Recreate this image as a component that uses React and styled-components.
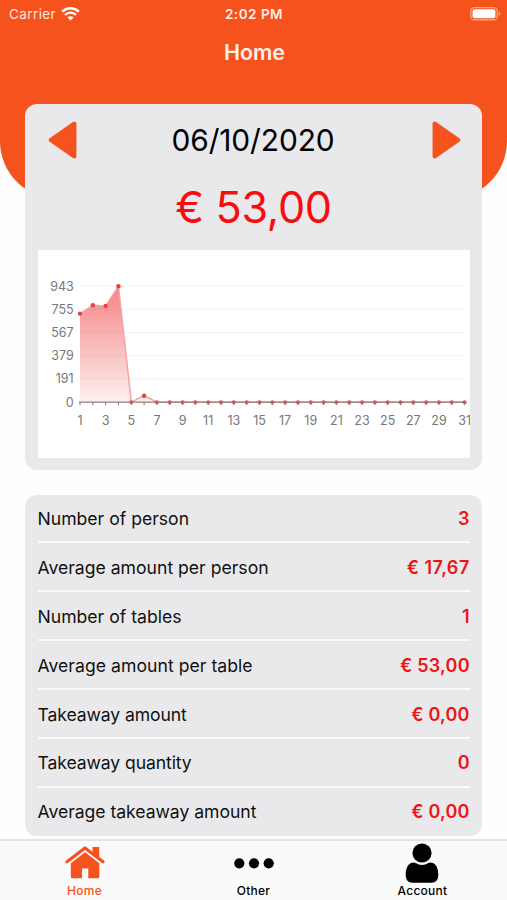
import React from "react";
import styled, { createGlobalStyle } from "styled-components";

const GlobalStyle = createGlobalStyle`
  * {
    box-sizing: border-box;
  }
  body {
    margin: 0;
    background: #fefefe;
    font-family: Inter, "Liberation Sans", sans-serif;
    color: #000;
  }
`;

const Screen = styled.div`
  display: flex;
  flex-direction: column;
  height: 900px;
  width: 507px;
  overflow: hidden;
`;

const Header = styled.header`
  flex: none;
  height: 199px;
  background: #f6521e;
  color: #fff;
  border-radius: 0 0 58px 58px;
`;

const StatusBar = styled.div`
  display: grid;
  grid-template-columns: 1fr auto 1fr;
  align-items: center;
  height: 27px;
  padding: 0 6px 0 9px;
  font-size: 13.5px;
  svg {
    display: block;
  }
`;

const Carrier = styled.div`
  display: flex;
  align-items: center;
  gap: 5px;
  letter-spacing: 0.4px;
  color: #ffe6dc;
`;

const Clock = styled.div`
  font-weight: 600;
  color: #ffeee8;
  letter-spacing: 0.5px;
  margin-left: -2px;
`;

const BatterySlot = styled.div`
  display: flex;
  justify-content: flex-end;
`;

const Title = styled.h1`
  margin: 0;
  padding-left: 2px;
  height: 50px;
  line-height: 50px;
  text-align: center;
  font-size: 21.5px;
  font-weight: 600;
  color: #ffefe9;
`;

const Content = styled.main`
  flex: 1;
  min-height: 0;
  display: flex;
  flex-direction: column;
  gap: 25px;
  margin-top: -95.5px;
  padding: 0 25px;
  overflow: hidden;
`;

const Card = styled.section`
  flex: none;
  padding: 0 12.5px;
  border-radius: 12px;
  background: #e9e9eb;
`;

const SummaryCard = styled(Card)`
  height: 366px;
`;

const DateRow = styled.div`
  display: flex;
  align-items: center;
  justify-content: space-between;
  height: 73px;
  padding: 0 9px 0 10px;
`;

const ArrowButton = styled.button`
  width: 29px;
  height: 38px;
  padding: 0;
  border: 0;
  background: none;
  svg {
    display: block;
    transform: ${(p) => (p.$next ? "scaleX(-1)" : "none")};
  }
`;

const DateText = styled.div`
  font-size: 29.9px;
  letter-spacing: -0.1px;
  margin-left: -2px;
`;

const Total = styled.div`
  height: 73.5px;
  line-height: 61.5px;
  text-align: center;
  font-size: 43.2px;
  color: #f70d0d;
  letter-spacing: -0.3px;
`;

const ChartBox = styled.div`
  height: 208px;
  background: #fff;
  svg {
    display: block;
    width: 100%;
  }
  text {
    font-size: 12.5px;
    fill: #777;
  }
`;

const StatList = styled(Card)`
  height: 341px;
`;

const Stat = styled.div`
  display: flex;
  align-items: center;
  justify-content: space-between;
  height: 48.85px;
  padding-top: 1.5px;
  border-bottom: 2px solid #fafafa;
  font-size: 17.6px;
  color: #111;
  &:last-child {
    border-bottom: 0;
    padding-top: 0;
  }
`;

const StatLabel = styled.span`
  letter-spacing: ${(p) => p.$spacing || 0}px;
`;

const StatValue = styled.span`
  font-size: 18px;
  font-weight: 600;
  color: #ee1414;
  letter-spacing: ${(p) => p.$spacing || 0.25}px;
  margin-right: -0.25px;
`;

const TabBar = styled.nav`
  flex: none;
  display: grid;
  grid-template-columns: repeat(3, 1fr);
  height: 61px;
  border-top: 2px solid #e3e3e3;
  background: #fafafa;
`;

const Tab = styled.a`
  display: flex;
  flex-direction: column;
  align-items: center;
  color: ${(p) => (p.$active ? "#f6521e" : "#000")};
  font-size: 12px;
  font-weight: 500;
  letter-spacing: 0.25px;
  line-height: 16px;
  svg {
    display: block;
    height: 42px;
  }
`;

const sales = [720, 788, 783, 943, 0, 53];
const days = Array.from({ length: 31 }, (_, i) => ({
  day: i + 1,
  amount: sales[i] || 0,
}));
const levels = [943, 755, 567, 379, 191, 0];

const BASE = 152.2;
const x = (day) => 42 + (day - 1) * 12.82;
const y = (amount) => BASE - (amount / 943) * 116;

const SalesChart = () => {
  const line = days.map((d) => `${x(d.day)},${y(d.amount)}`).join(" ");

  return (
    <svg height="208">
      <defs>
        <linearGradient id="fade" x1="0" y1="0" x2="0" y2="1">
          <stop offset="0" stopColor="#ee4545" stopOpacity="0.66" />
          <stop offset="1" stopColor="#ee4545" stopOpacity="0.08" />
        </linearGradient>
      </defs>
      {levels.map((l) => (
        <g key={l}>
          {l > 0 && (
            <line x1={x(1)} x2={x(31)} y1={y(l)} y2={y(l)} stroke="#f3f3f3" />
          )}
          <text x="35.7" y={y(l) + 4.7} textAnchor="end">
            {l}
          </text>
        </g>
      ))}
      <polygon
        points={`${x(1)},${BASE} ${line} ${x(31)},${BASE}`}
        fill="url(#fade)"
      />
      <polyline points={line} fill="none" stroke="#f5a3a3" strokeWidth="1.5" />
      <line
        x1={x(1) - 1}
        x2={x(31)}
        y1={BASE}
        y2={BASE}
        stroke="#8f7d84"
        strokeWidth="1.3"
      />
      {days.map((d) => (
        <g key={d.day}>
          <line
            x1={x(d.day)}
            x2={x(d.day)}
            y1={BASE}
            y2={BASE + 3}
            stroke="#777"
          />
          <circle
            cx={x(d.day)}
            cy={y(d.amount)}
            r={d.amount ? 2.2 : 2}
            fill={d.amount ? "#e83f45" : "#d2565f"}
          />
          {d.day % 2 === 1 && (
            <text x={x(d.day)} y="175.3" textAnchor="middle">
              {d.day}
            </text>
          )}
        </g>
      ))}
    </svg>
  );
};

const WifiIcon = () => (
  <svg width="19" height="14" viewBox="0 0 19 14" fill="none" stroke="#fff">
    <path d="M1.2 4.6a11.8 11.8 0 0 1 16.6 0" strokeWidth="2.6" />
    <path d="M4.1 7.8a7.7 7.7 0 0 1 10.8 0" strokeWidth="2.4" />
    <path
      d="M9.5 13.4 6.5 10.4a4.2 4.2 0 0 1 6 0z"
      fill="#fff"
      stroke="none"
    />
  </svg>
);

const BatteryIcon = () => (
  <svg width="31" height="14" viewBox="0 0 31 14">
    <rect
      x="0.8"
      y="0.7"
      width="26.4"
      height="12.2"
      rx="3.6"
      fill="none"
      stroke="#fba98e"
      strokeWidth="1.2"
    />
    <rect x="2.6" y="2.2" width="22.8" height="9" rx="2" fill="#fff" />
    <path d="M28.6 4.7v4c1-.3 1.6-1.1 1.6-2s-.6-1.7-1.6-2z" fill="#fba98e" />
  </svg>
);

const ArrowIcon = () => (
  <svg width="29" height="38" viewBox="0 0 29 38">
    <path
      d="M26.2 2.8v32.4L3 19z"
      fill="#f6521e"
      stroke="#f6521e"
      strokeWidth="4.5"
      strokeLinejoin="round"
    />
  </svg>
);

const HomeIcon = () => (
  <svg width="42" height="42" viewBox="0 0 42 42">
    <path
      d="M3 20.8 21 7l18 13.8"
      fill="none"
      stroke="currentColor"
      strokeWidth="3.2"
      strokeLinecap="round"
      strokeLinejoin="round"
    />
    <path
      d="M28.5 6h6.7v12l-6.7-5.2z M21 11.3 35.3 22.2V35.7q0 1.5-1.5 1.5H24.3V27.5H18V37.2H8.3q-1.5 0-1.5-1.5V22.2z"
      fill="currentColor"
    />
  </svg>
);

const DotsIcon = () => (
  <svg width="42" height="42" viewBox="0 0 42 42" fill="currentColor">
    <circle cx="6.3" cy="22.3" r="5.1" />
    <circle cx="21" cy="22.3" r="5.1" />
    <circle cx="35.7" cy="22.3" r="5.1" />
  </svg>
);

const PersonIcon = () => (
  <svg width="35" height="42" viewBox="0 0 35 42" fill="currentColor">
    <circle cx="17" cy="12" r="9.6" />
    <path d="M8.2 21.5q1.4 0 2.3.6 6.5 4 13 0 .9-.6 2.3-.6c5.500.3 7.500 6.500 7.500 12.300 0 5-2.500 8-6.800 8h-19c-4.300 0-6.800-3-6.800-8 0-5.800 2-12 7.500-12.300z" />
  </svg>
);

const stats = [
  { label: "Number of person", value: "3" },
  { label: "Average amount per person", value: "€ 17,67", valueSpacing: 0.5 },
  { label: "Number of tables", value: "1" },
  { label: "Average amount per table", value: "€ 53,00", spacing: 0.04 },
  { label: "Takeaway amount", value: "€ 0,00", spacing: -0.1 },
  { label: "Takeaway quantity", value: "0", spacing: -0.1 },
  { label: "Average takeaway amount", value: "€ 0,00", spacing: -0.04 },
];

function App() {
  return (
    <Screen>
      <GlobalStyle />
      <Header>
        <StatusBar>
          <Carrier>
            Carrier <WifiIcon />
          </Carrier>
          <Clock>2:02 PM</Clock>
          <BatterySlot>
            <BatteryIcon />
          </BatterySlot>
        </StatusBar>
        <Title>Home</Title>
      </Header>
      <Content>
        <SummaryCard>
          <DateRow>
            <ArrowButton aria-label="Previous day">
              <ArrowIcon />
            </ArrowButton>
            <DateText>06/10/2020</DateText>
            <ArrowButton $next aria-label="Next day">
              <ArrowIcon />
            </ArrowButton>
          </DateRow>
          <Total>€ 53,00</Total>
          <ChartBox>
            <SalesChart />
          </ChartBox>
        </SummaryCard>
        <StatList>
          {stats.map((s) => (
            <Stat key={s.label}>
              <StatLabel $spacing={s.spacing}>{s.label}</StatLabel>
              <StatValue $spacing={s.valueSpacing}>{s.value}</StatValue>
            </Stat>
          ))}
        </StatList>
      </Content>
      <TabBar>
        <Tab $active>
          <HomeIcon />
          Home
        </Tab>
        <Tab>
          <DotsIcon />
          Other
        </Tab>
        <Tab>
          <PersonIcon />
          Account
        </Tab>
      </TabBar>
    </Screen>
  );
}

export default App;
